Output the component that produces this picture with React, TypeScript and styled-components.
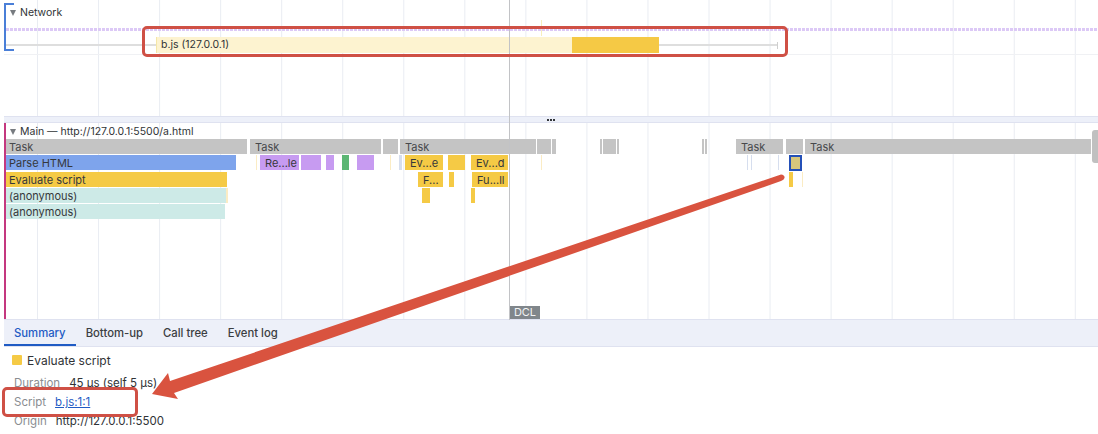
import React from 'react';
import styled, { createGlobalStyle } from 'styled-components';

const GlobalStyle = createGlobalStyle`
  html, body {
    margin: 0;
    padding: 0;
    background: #fff;
  }
  body {
    font-family: Inter, "Liberation Sans", sans-serif;
    color: #303336;
  }
`;

const Page = styled.div`
  position: relative;
  width: 1098px;
  height: 434px;
  overflow: hidden;
  display: flex;
  flex-direction: column;
`;

const Track = styled.section<{ $height: number }>`
  position: relative;
  height: ${(p) => p.$height}px;
  flex: none;
  background-image: linear-gradient(to right, #e9ecf2 1px, transparent 1px);
  background-size: 61.06px 100%;
  background-position: 37px 0;
`;

const TrackTitle = styled.div<{ $top: number }>`
  display: flex;
  align-items: center;
  gap: 4px;
  height: 14px;
  padding: ${(p) => p.$top}px 0 0 10px;
  font-size: 10.5px;
  line-height: 14px;
`;

const Triangle = styled.span`
  width: 0;
  height: 0;
  border-left: 3.5px solid transparent;
  border-right: 3.5px solid transparent;
  border-top: 6px solid #777b80;
`;

const GroupBracket = styled.div`
  position: absolute;
  left: 4px;
  top: 3px;
  width: 8px;
  height: 44px;
  border: solid #4a7fd8;
  border-width: 2px 0 2px 2px;
`;

const DottedLine = styled.div`
  position: absolute;
  left: 6px;
  right: 0;
  top: 28px;
  height: 3px;
  background-image: linear-gradient(to right, #dcc9f6 3px, transparent 3px);
  background-size: 4px 3px;
`;

const RowLine = styled.div`
  position: absolute;
  left: 4px;
  right: 0;
  top: 54px;
  height: 1px;
  background: #f0f1f4;
`;

const Whisker = styled.div<{ $x: number; $w: number }>`
  position: absolute;
  left: ${(p) => p.$x}px;
  width: ${(p) => p.$w}px;
  top: 44px;
  height: 2px;
  background: #dedede;
`;

const WhiskerEnd = styled.div`
  position: absolute;
  left: 777px;
  top: 42px;
  width: 1px;
  height: 7px;
  background: #cfcfcf;
`;

const RequestTick = styled.div`
  position: absolute;
  left: 541px;
  top: 20px;
  width: 1px;
  height: 16px;
  background: #f8eebd;
`;

const RequestBar = styled.div`
  position: absolute;
  left: 156px;
  top: 37px;
  width: 503px;
  height: 16px;
  display: flex;
  font-size: 10.5px;
  line-height: 16px;
`;

const RequestWait = styled.div`
  width: 416px;
  padding-left: 4px;
  box-sizing: border-box;
  background: #fdf3d0;
  border-left: 1px solid #f5e7a8;
`;

const RequestDownload = styled.div`
  flex: 1;
  background: #f5c945;
`;

const Resizer = styled.div`
  flex: none;
  height: 5px;
  margin-left: 4px;
  display: flex;
  justify-content: center;
  align-items: center;
  gap: 1px;
  background: #edf0f9;
  border: solid #dfe2f0;
  border-width: 1px 0;
`;

const ResizerDot = styled.span`
  width: 2px;
  height: 2px;
  background: #33363a;
`;

const MainStripe = styled.div`
  position: absolute;
  left: 4px;
  top: 0;
  bottom: 0;
  width: 2px;
  background: #c4387f;
  z-index: 2;
`;

const FlameChart = styled.div`
  display: flex;
  flex-direction: column;
`;

const FlameRow = styled.div`
  position: relative;
  height: 16.25px;
`;

const kindColors = {
  task: '#c4c4c4',
  parse: '#7ea4ec',
  script: '#f5ca45',
  call: '#cdeae7',
  paint: '#c79bf1',
  green: '#5cb674',
  faint: '#fbecc4',
  pale: '#d6deee',
  selected: '#d7c67c',
};

type BarKind = keyof typeof kindColors;

const Bar = styled.div<{ $x: number; $w: number; $kind: BarKind; $inset?: number }>`
  position: absolute;
  left: ${(p) => p.$x}px;
  width: ${(p) => p.$w}px;
  top: 0;
  height: 15px;
  box-sizing: border-box;
  padding-left: ${(p) => p.$inset ?? 0}px;
  background: ${(p) => kindColors[p.$kind]};
  font-size: 11px;
  line-height: 16px;
  white-space: nowrap;
  overflow: hidden;
  color: ${(p) => (p.$kind === 'task' ? '#47494c' : '#36383b')};
`;

const SelectedBar = styled(Bar)`
  border: 2px solid #2450b8;
  height: 16px;
`;

const ScrollThumb = styled.div`
  position: absolute;
  left: 1092px;
  top: 7px;
  width: 8px;
  height: 33px;
  border-radius: 3px;
  background: #c0c0c0;
`;

const DclLine = styled.div`
  position: absolute;
  left: 509px;
  top: 0;
  width: 1px;
  height: 320px;
  background: #c2c3c6;
  z-index: 3;
`;

const DclLabel = styled.div`
  position: absolute;
  left: 510px;
  top: 306px;
  width: 30px;
  height: 13px;
  background: #80868b;
  color: #f2f3f4;
  font-size: 11px;
  line-height: 13px;
  text-align: center;
  z-index: 3;
`;

const TabBar = styled.nav`
  flex: none;
  height: 26px;
  margin-left: 4px;
  display: flex;
  background: #edf0f9;
  border: solid #dfe2f0;
  border-width: 1px 0;
`;

const Tab = styled.div<{ $active?: boolean }>`
  padding: 0 10px;
  font-size: 11.3px;
  font-weight: 500;
  line-height: 27px;
  height: 26px;
  box-sizing: border-box;
  color: ${(p) => (p.$active ? '#1f5bc4' : '#3b3e42')};
  border-bottom: 2px solid ${(p) => (p.$active ? '#1f5bc4' : 'transparent')};
`;

const Details = styled.div`
  flex: 1;
  padding: 5px 0 0 12px;
`;

const DetailTitle = styled.div`
  display: flex;
  align-items: center;
  gap: 5px;
  height: 16px;
  font-size: 12px;
  margin-bottom: 6px;
`;

const Swatch = styled.span`
  width: 10px;
  height: 10px;
  background: #f5ca45;
  border-radius: 1px;
`;

const DetailRow = styled.div`
  display: flex;
  gap: 9px;
  height: 19px;
  padding-left: 2px;
  font-size: 11.5px;
  line-height: 19px;
`;

const DetailLabel = styled.span`
  color: #8a8d91;
`;

const DetailLink = styled.span`
  color: #1f5bc4;
  text-decoration: underline;
`;

const Callout = styled.div<{ $x: number; $y: number; $w: number; $h: number }>`
  position: absolute;
  left: ${(p) => p.$x}px;
  top: ${(p) => p.$y}px;
  width: ${(p) => p.$w}px;
  height: ${(p) => p.$h}px;
  box-sizing: border-box;
  border: 3px solid #cf5045;
  border-radius: 5px;
  z-index: 4;
`;

const ArrowOverlay = styled.svg`
  position: absolute;
  inset: 0;
  z-index: 5;
  pointer-events: none;
`;

type BarData = { x: number; w: number; kind: BarKind; label?: string; inset?: number };

const flameRows: BarData[][] = [
  [
    { x: 6, w: 241, kind: 'task', label: 'Task', inset: 3 },
    { x: 250, w: 131, kind: 'task', label: 'Task', inset: 5 },
    { x: 383, w: 15, kind: 'task' },
    { x: 400, w: 136, kind: 'task', label: 'Task', inset: 5 },
    { x: 537, w: 14, kind: 'task' },
    { x: 552, w: 4, kind: 'task' },
    { x: 600, w: 2, kind: 'task' },
    { x: 603, w: 13, kind: 'task' },
    { x: 617, w: 2, kind: 'task' },
    { x: 702, w: 2, kind: 'task' },
    { x: 705, w: 2, kind: 'task' },
    { x: 736, w: 47, kind: 'task', label: 'Task', inset: 5 },
    { x: 786, w: 17, kind: 'task' },
    { x: 805, w: 286, kind: 'task', label: 'Task', inset: 5 },
  ],
  [
    { x: 6, w: 230, kind: 'parse', label: 'Parse HTML', inset: 3 },
    { x: 256, w: 1, kind: 'faint' },
    { x: 260, w: 39, kind: 'paint', label: 'Re...le', inset: 5 },
    { x: 301, w: 20, kind: 'paint' },
    { x: 326, w: 8, kind: 'paint' },
    { x: 342, w: 7, kind: 'green' },
    { x: 357, w: 17, kind: 'paint' },
    { x: 390, w: 1, kind: 'faint' },
    { x: 399, w: 3, kind: 'pale' },
    { x: 405, w: 38, kind: 'script', label: 'Ev...e', inset: 5 },
    { x: 448, w: 17, kind: 'script' },
    { x: 471, w: 37, kind: 'script', label: 'Ev...d', inset: 5 },
    { x: 541, w: 1, kind: 'faint' },
    { x: 747, w: 1, kind: 'pale' },
    { x: 751, w: 1, kind: 'pale' },
    { x: 778, w: 1, kind: 'pale' },
  ],
  [
    { x: 6, w: 221, kind: 'script', label: 'Evaluate script', inset: 3 },
    { x: 418, w: 25, kind: 'script', label: 'F...', inset: 5 },
    { x: 449, w: 5, kind: 'script' },
    { x: 472, w: 36, kind: 'script', label: 'Fu...ll', inset: 5 },
    { x: 789, w: 4, kind: 'script' },
    { x: 802, w: 1, kind: 'faint' },
  ],
  [
    { x: 6, w: 220, kind: 'call', label: '(anonymous)', inset: 3 },
    { x: 226, w: 2, kind: 'faint' },
    { x: 422, w: 8, kind: 'script' },
    { x: 471, w: 4, kind: 'script' },
  ],
  [{ x: 6, w: 219, kind: 'call', label: '(anonymous)', inset: 3 }],
];

function App() {
  return (
    <Page>
      <GlobalStyle />
      <Track $height={116}>
        <TrackTitle $top={6}>
          <Triangle />
          Network
        </TrackTitle>
        <GroupBracket />
        <DottedLine />
        <RowLine />
        <RequestTick />
        <Whisker $x={6} $w={150} />
        <RequestBar>
          <RequestWait>b.js (127.0.0.1)</RequestWait>
          <RequestDownload />
        </RequestBar>
        <Whisker $x={659} $w={118} />
        <WhiskerEnd />
      </Track>
      <Resizer>
        <ResizerDot />
        <ResizerDot />
        <ResizerDot />
      </Resizer>
      <Track $height={196}>
        <MainStripe />
        <TrackTitle $top={2}>
          <Triangle />
          Main — http://127.0.0.1:5500/a.html
        </TrackTitle>
        <FlameChart>
          {flameRows.map((row, i) => (
            <FlameRow key={i}>
              {row.map((bar) => (
                <Bar key={bar.x} $x={bar.x} $w={bar.w} $kind={bar.kind} $inset={bar.inset}>
                  {bar.label}
                </Bar>
              ))}
              {i === 1 && <SelectedBar $x={789} $w={13} $kind="selected" />}
            </FlameRow>
          ))}
        </FlameChart>
        <ScrollThumb />
      </Track>
      <TabBar>
        <Tab $active>Summary</Tab>
        <Tab>Bottom-up</Tab>
        <Tab>Call tree</Tab>
        <Tab>Event log</Tab>
      </TabBar>
      <Details>
        <DetailTitle>
          <Swatch />
          Evaluate script
        </DetailTitle>
        <DetailRow>
          <DetailLabel>Duration</DetailLabel>
          <span>45 μs (self 5 μs)</span>
        </DetailRow>
        <DetailRow>
          <DetailLabel>Script</DetailLabel>
          <DetailLink>b.js:1:1</DetailLink>
        </DetailRow>
        <DetailRow>
          <DetailLabel>Origin</DetailLabel>
          <span>http://127.0.0.1:5500</span>
        </DetailRow>
      </Details>
      <DclLine />
      <DclLabel>DCL</DclLabel>
      <Callout $x={142} $y={26} $w={646} $h={31} />
      <Callout $x={2} $y={387} $w={136} $h={30} />
      <ArrowOverlay width="1098" height="434" viewBox="0 0 1098 434">
        <path
          d="M781 174.500 Q785 175 784.500 178 Q784 180 781 181 L174 393 L178 399 L152 394 L168 373 L170 381 Z"
          fill="#d9533f"
        />
      </ArrowOverlay>
    </Page>
  );
}

export default App;
